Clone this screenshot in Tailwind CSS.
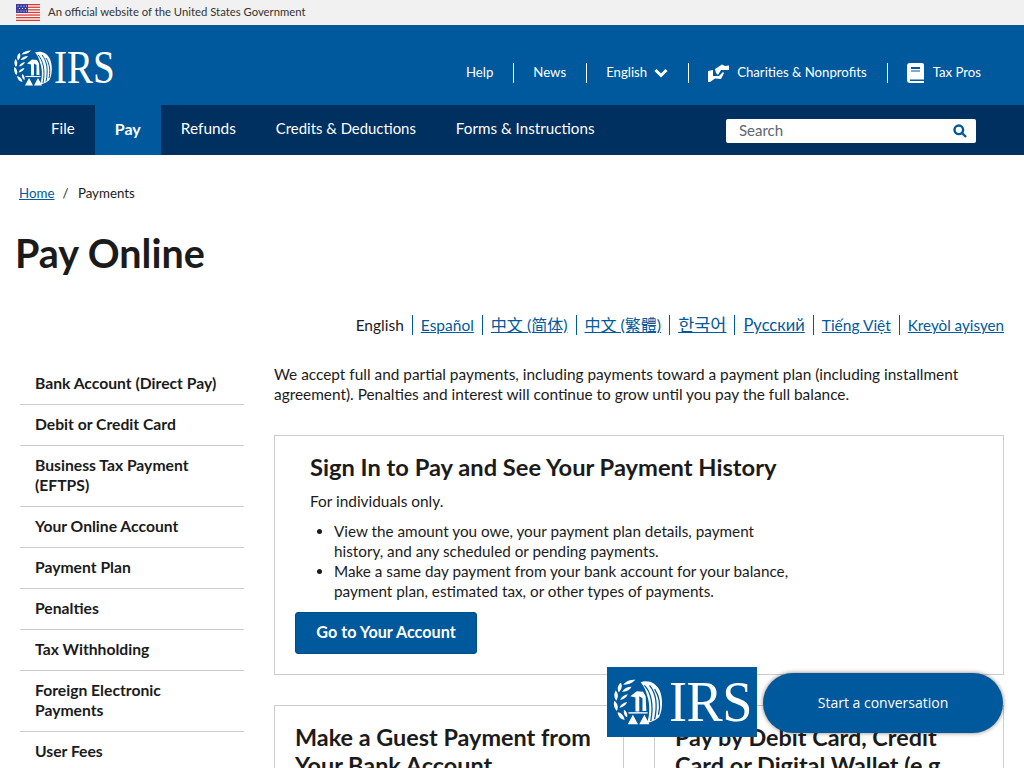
<!DOCTYPE html>
<html lang="en">
<head>
<meta charset="utf-8">
<script src="https://cdn.jsdelivr.net/npm/@tailwindcss/browser@4"></script>
</head>
<body class="w-[1024px] h-[768px] overflow-hidden relative bg-white text-[#1b1b1b] font-['Lato','Noto_Sans_CJK_SC',sans-serif]">
<div class="h-[25px] bg-[#f1f1f1] flex items-center pl-4 gap-2 text-[11.3px] text-[#333]">
  <svg width="24" height="17" viewBox="0 0 24 17"><rect width="24" height="17" fill="#fff"/><g fill="#d83933"><rect width="24" height="1.3"/><rect y="2.6" width="24" height="1.3"/><rect y="5.2" width="24" height="1.3"/><rect y="7.8" width="24" height="1.3"/><rect y="10.4" width="24" height="1.3"/><rect y="13" width="24" height="1.3"/><rect y="15.7" width="24" height="1.3"/></g><rect width="12" height="9" fill="#3c3b9e"/><g fill="#fff"><circle cx="2" cy="2" r=".6"/><circle cx="5" cy="2" r=".6"/><circle cx="8" cy="2" r=".6"/><circle cx="10.5" cy="2" r=".6"/><circle cx="3.5" cy="4.5" r=".6"/><circle cx="6.5" cy="4.5" r=".6"/><circle cx="9.5" cy="4.5" r=".6"/><circle cx="2" cy="7" r=".6"/><circle cx="5" cy="7" r=".6"/><circle cx="8" cy="7" r=".6"/><circle cx="10.5" cy="7" r=".6"/></g></svg>
  <span>An official website of the United States Government</span>
</div>
<header class="h-[80px] bg-[#00599c] flex items-center justify-between pl-[14px] pr-[43px] text-white">
  <div class="flex items-center gap-[2px] mt-[5px]">
    <svg width="38" height="36" viewBox="0 0 38 36" fill="#fff">
      <path d="M17 .5C14 3.500 11 4.500 7.500 4.500C9.500 1.500 13 .5 17 .5zM5.500 3C7 5 6.500 8 4 10.500C2.500 8 3 5 5.500 3zM14 6C12.500 8.500 10 10 6.500 10C8 7.500 10.500 6 14 6zM1.500 9C3.500 11 4 14 2 17C0 14.500 0 11.500 1.500 9zM11 12C10 14.500 8 16 5 16.500C6 14 8 12.500 11 12zM.5 17C3 19 4 22 2.500 25C.5 23 -.5 20 .5 17zM10.500 18C9.500 20.500 7.500 22 4.500 22.500C5.500 20 7.500 18.500 10.500 18zM3 26C6 26.500 8 28.500 8.500 32C5.500 31.500 3.500 29.500 3 26zM8 24C10 25 11 27 10.500 30C8.500 29 7.500 27 8 24z"/>
      <path d="M21 2.500C27 .5 33 3 36 9C38.500 15 38.500 24 35.500 30C32 33 28.500 34 26 34.500C28.500 28 28.500 19 26 12.500C25 8.500 23.500 5 21 2.500z"/>
      <path d="M24 5C29 10 31.500 20 29 33M28 5C33 11 34.500 20 32 31.500M32 8C36 14 36.500 22 35 28" fill="none" stroke="#00599c" stroke-width="1"/>
      <path d="M13 13.500L18 9.500L23 10L25 13.500L25.500 25L22.500 25L22.500 15L20 13.500L20 25.500L17 25.500L17 14.500z"/>
      <path d="M11.500 26.500H26.500" stroke="#fff" stroke-width="1.100"/>
      <path d="M11 35.500L15 28L19 35.500zM20 35.500L24 28L28 35.500z"/>
    </svg>
    <span class="font-['Liberation_Serif',serif] text-[46px] leading-none w-[60px] origin-left scale-x-[0.85] inline-block">IRS</span>
  </div>
  <nav class="flex items-center text-[13.200px] mt-[15px]">
    <a class="pr-5">Help</a>
    <a class="pl-[19px] pr-5 border-l border-white h-[20px] flex items-center">News</a>
    <a class="pl-[19px] pr-5 border-l border-white h-[20px] flex items-center gap-[7px]">English
      <svg width="14" height="10" viewBox="0 0 14 10" fill="none" stroke="#fff" stroke-width="3"><path d="M1.500 2l5.500 5.500L12.500 2"/></svg></a>
    <a class="pl-[19px] pr-5 border-l border-white h-[20px] flex items-center gap-2">
      <svg width="21" height="19" viewBox="0 0 21 19" fill="#fff"><path d="M7 6L14 1.500L17 3L21 2.500V7L13 7L10 12L8 10z"/><path d="M0 8L5 7V13H11L15 9L16 10L13 16L7 15.500L2 19H0z"/></svg>
      Charities &amp; Nonprofits</a>
    <a class="pl-[19px] border-l border-white h-[20px] flex items-center gap-[9px]">
      <svg width="17" height="20" viewBox="0 0 17 20"><path d="M3 0h12a2 2 0 0 1 2 2v18H3a3 3 0 0 1-3-3V3a3 3 0 0 1 3-3z" fill="#fff"/><path d="M4 4h9v2H4zM4 7.500h9v1H4z" fill="#00599c"/><path d="M3 16.500h14v1.500H3z" fill="#00599c"/></svg>
      Tax Pros</a>
  </nav>
</header>
<div class="h-[50px] bg-[#00305f] flex items-center justify-between pr-[48px] text-white text-[15.200px]">
  <nav class="flex h-full pl-[31px]">
    <a class="px-5 flex items-center pb-[3px]">File</a>
    <a class="px-5 flex items-center pb-[3px] bg-[#00599c] font-bold text-[16px]">Pay</a>
    <a class="px-5 flex items-center pb-[3px] text-[15.400px]">Refunds</a>
    <a class="px-5 flex items-center pb-[3px] text-[14.900px]">Credits &amp; Deductions</a>
    <a class="px-5 flex items-center pb-[3px]">Forms &amp; Instructions</a>
  </nav>
  <div class="w-[250px] h-[24px] bg-white rounded-[2px] flex items-center justify-between pl-[13px] pr-[9px] text-[#5c6670] text-[15px] mt-[2px]">
    <span class="-translate-y-[1px]">Search</span>
    <svg width="14" height="14" viewBox="0 0 14 14" fill="none" stroke="#00599c" stroke-width="2.400"><circle cx="5.800" cy="5.800" r="4.300"/><path d="M9 9l4 4"/></svg>
  </div>
</div>
<main class="pl-4 pr-5">
  <div class="pl-[3px] pt-[28px] text-[13.300px] leading-[20px]"><a class="underline text-[#00599c]">Home</a><span class="mx-2">/</span> <span class="-ml-[2px]">Payments</span></div>
  <h1 class="mt-[28px] -ml-[1px] text-[39.500px] leading-[44px] font-bold">Pay Online</h1>
  <div class="mt-[40px] flex justify-end items-center text-[15.500px] leading-[20px] text-[#00599c]">
    <span class="text-[#1b1b1b] pr-2">English</span>
    <a class="underline px-2 border-l border-[#00599c]">Español</a>
    <a class="underline px-2 border-l border-[#00599c] text-[16px]">中文 (简体)</a>
    <a class="underline px-2 border-l border-[#00599c] text-[16px]">中文 (繁體)</a>
    <a class="underline px-2 border-l border-[#00599c] text-[17.500px]">한국어</a>
    <a class="underline px-2 border-l border-[#00599c] text-[16.500px]">Русский</a>
    <a class="underline px-2 border-l border-[#00599c]">Tiếng Việt</a>
    <a class="underline pl-2 border-l border-[#00599c] text-[15.200px]">Kreyòl ayisyen</a>
  </div>
  <div class="mt-[29px] flex gap-[30px] items-start">
    <aside class="w-[224px] ml-1 shrink-0 text-[15.700px] leading-[20px] font-bold">
      <a class="block pl-[15px] pt-[9px] pb-[11px] border-b border-[#ccc]">Bank Account (Direct Pay)</a>
      <a class="block pl-[15px] pt-[9px] pb-[11px] border-b border-[#ccc]">Debit or Credit Card</a>
      <a class="block pl-[15px] pt-[9px] pb-[11px] border-b border-[#ccc]">Business Tax Payment<br>(EFTPS)</a>
      <a class="block pl-[15px] pt-[9px] pb-[11px] border-b border-[#ccc]">Your Online Account</a>
      <a class="block pl-[15px] pt-[9px] pb-[11px] border-b border-[#ccc]">Payment Plan</a>
      <a class="block pl-[15px] pt-[9px] pb-[11px] border-b border-[#ccc]">Penalties</a>
      <a class="block pl-[15px] pt-[9px] pb-[11px] border-b border-[#ccc]">Tax Withholding</a>
      <a class="block pl-[15px] pt-[9px] pb-[11px] border-b border-[#ccc]">Foreign Electronic<br>Payments</a>
      <a class="block pl-[15px] pt-[9px] pb-[11px]">User Fees</a>
    </aside>
    <section class="w-[730px] shrink-0">
      <p class="text-[15.400px] leading-[20px]">We accept full and partial payments, including payments toward a payment plan (including installment<br>agreement). Penalties and interest will continue to grow until you pay the full balance.</p>
      <div class="mt-[31px] h-[240px] border border-[#ccc] pl-5 pt-[16px]">
        <div class="pl-[15px]">
          <h2 class="text-[23.700px] leading-[30px] font-bold">Sign In to Pay and See Your Payment History</h2>
          <p class="mt-[9px] text-[15.400px] leading-[20px]">For individuals only.</p>
          <ul class="mt-[10px] list-disc pl-6 text-[15.270px] leading-[20px]">
            <li>View the amount you owe, your payment plan details, payment<br>history, and any scheduled or pending payments.</li>
            <li>Make a same day payment from your bank account for your balance,<br>payment plan, estimated tax, or other types of payments.</li>
          </ul>
        </div>
        <a class="mt-[11px] flex items-center justify-center w-[182px] h-[42px] pb-[2px] bg-[#00599c] border border-[#004c85] rounded-[3px] text-white font-bold text-[16.200px]">Go to Your Account</a>
      </div>
      <div class="mt-[30px] grid grid-cols-[350px_350px] gap-[30px]">
        <div class="border border-[#ccc] h-[200px] pl-5 pt-[17px] text-[23.400px] leading-[28px] font-bold">Make a Guest Payment from<br>Your Bank Account</div>
        <div class="border border-[#ccc] h-[200px] pl-5 pt-[17px] text-[23.400px] leading-[28px] font-bold">Pay by Debit Card, Credit<br>Card or Digital Wallet (e.g.</div>
      </div>
    </section>
  </div>
</main>
<div class="absolute left-[607px] top-[667px] w-[150px] h-[70px] bg-[#00599c] flex items-center pl-[5px] text-white">
  <svg width="52" height="46" viewBox="0 0 38 36" fill="#fff">
    <path d="M17 .5C14 3.500 11 4.500 7.500 4.500C9.500 1.500 13 .5 17 .5zM5.500 3C7 5 6.500 8 4 10.500C2.500 8 3 5 5.500 3zM14 6C12.500 8.500 10 10 6.500 10C8 7.500 10.500 6 14 6zM1.500 9C3.500 11 4 14 2 17C0 14.500 0 11.500 1.500 9zM11 12C10 14.500 8 16 5 16.500C6 14 8 12.500 11 12zM.5 17C3 19 4 22 2.500 25C.5 23 -.5 20 .5 17zM10.500 18C9.500 20.500 7.500 22 4.500 22.500C5.500 20 7.500 18.500 10.500 18zM3 26C6 26.500 8 28.500 8.500 32C5.500 31.500 3.500 29.500 3 26zM8 24C10 25 11 27 10.500 30C8.500 29 7.500 27 8 24z"/>
    <path d="M21 2.500C27 .5 33 3 36 9C38.500 15 38.500 24 35.500 30C32 33 28.500 34 26 34.500C28.500 28 28.500 19 26 12.500C25 8.500 23.500 5 21 2.500z"/>
    <path d="M24 5C29 10 31.500 20 29 33M28 5C33 11 34.500 20 32 31.500M32 8C36 14 36.500 22 35 28" fill="none" stroke="#00599c" stroke-width="1"/>
    <path d="M13 13.500L18 9.500L23 10L25 13.500L25.500 25L22.500 25L22.500 15L20 13.500L20 25.500L17 25.500L17 14.500z"/>
    <path d="M11.500 26.500H26.500" stroke="#fff" stroke-width="1.100"/>
    <path d="M11 35.500L15 28L19 35.500zM20 35.500L24 28L28 35.500z"/>
  </svg>
  <span class="ml-[5px] font-['Liberation_Serif',serif] text-[56px] leading-none tracking-[-0.5px] w-[84px] origin-left scale-x-[0.97] inline-block">IRS</span>
</div>
<div class="absolute left-[763px] top-[673px] w-[240px] h-[60px] rounded-[30px] bg-[#00599c] shadow-[0_0_4px_rgba(60,40,20,0.6)] flex items-center justify-center pb-[1px] text-white text-[14px] font-['Open_Sans',sans-serif]">Start a conversation</div>
</body>
</html>
